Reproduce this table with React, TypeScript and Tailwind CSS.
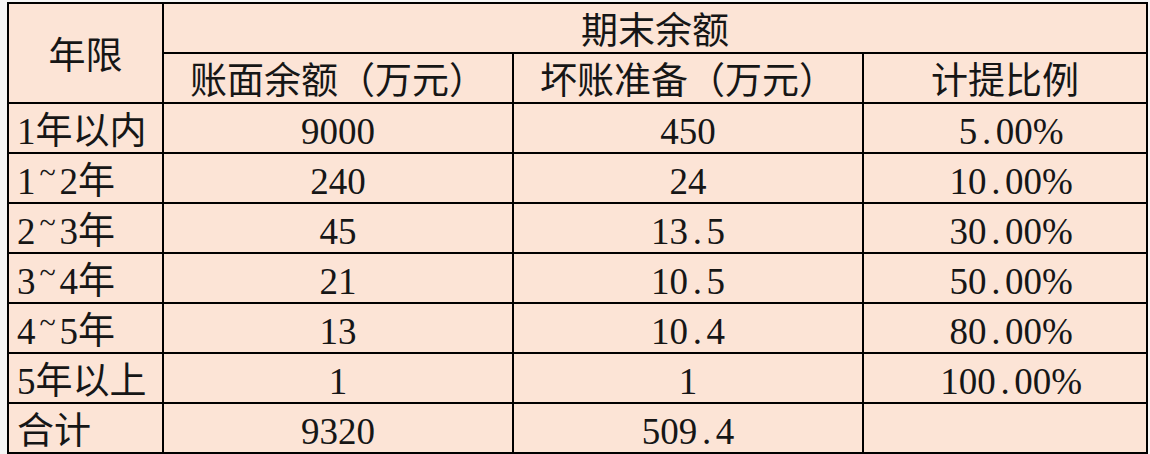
import React from "react"

const rows = [
  { term: "1年以内", book: "9000", bad: "450", rate: "5.00%" },
  { term: "1~2年", book: "240", bad: "24", rate: "10.00%" },
  { term: "2~3年", book: "45", bad: "13.5", rate: "30.00%" },
  { term: "3~4年", book: "21", bad: "10.5", rate: "50.00%" },
  { term: "4~5年", book: "13", bad: "10.4", rate: "80.00%" },
  { term: "5年以上", book: "1", bad: "1", rate: "100.00%" },
  { term: "合计", book: "9320", bad: "509.4", rate: "" },
]

// half-width chars in the sheet font are all 0.5em wide
function Num({ value }: { value: string }) {
  return (
    <>
      {value.split("").map((c, i) => (
        <span key={i} className="inline-block w-[0.5em] text-center">
          {c}
        </span>
      ))}
    </>
  )
}

function Term({ value }: { value: string }) {
  const parts = value.split("~")
  if (parts.length === 1) return <>{value}</>
  return (
    <>
      {parts[0]}
      <span className="relative -top-[11px] inline-block w-[20px] mx-[2px] text-center text-[30px] leading-none">~</span>
      {parts[1]}
    </>
  )
}

const cell = "border-2 border-black p-0 align-middle pt-[7px] leading-none"

export default function App() {
  return (
    <div
      className="w-[1150px] h-[454px] bg-[#f6f6f6] pl-[7px] pt-[2px] overflow-hidden"
      style={{ fontFamily: '"Liberation Serif", "Noto Sans CJK SC", serif' }}
    >
      <table className="border-collapse table-fixed bg-[#fce4d6] text-[37px] text-[#161616]">
        <colgroup>
          <col className="w-[155px]" />
          <col className="w-[350px]" />
          <col className="w-[350px]" />
          <col className="w-[284px]" />
        </colgroup>
        <tbody>
          <tr className="h-[50px]">
            <td rowSpan={2} className={`${cell} text-center`}>
              年限
            </td>
            <td colSpan={3} className={`${cell} text-center`}>
              期末余额
            </td>
          </tr>
          <tr className="h-[50px]">
            <td className={`${cell} text-center`}>账面余额（万元）</td>
            <td className={`${cell} text-center`}>坏账准备（万元）</td>
            <td className={`${cell} text-center`}>计提比例</td>
          </tr>
          {rows.map((r) => (
            <tr key={r.term} className="h-[50px]">
              <td className={`${cell} pl-[8px] text-left`}>
                <Term value={r.term} />
              </td>
              <td className={`${cell} text-center`}>
                <Num value={r.book} />
              </td>
              <td className={`${cell} text-center`}>
                <Num value={r.bad} />
              </td>
              <td className={`${cell} text-center`}>
                <Num value={r.rate} />
              </td>
            </tr>
          ))}
        </tbody>
      </table>
    </div>
  )
}
